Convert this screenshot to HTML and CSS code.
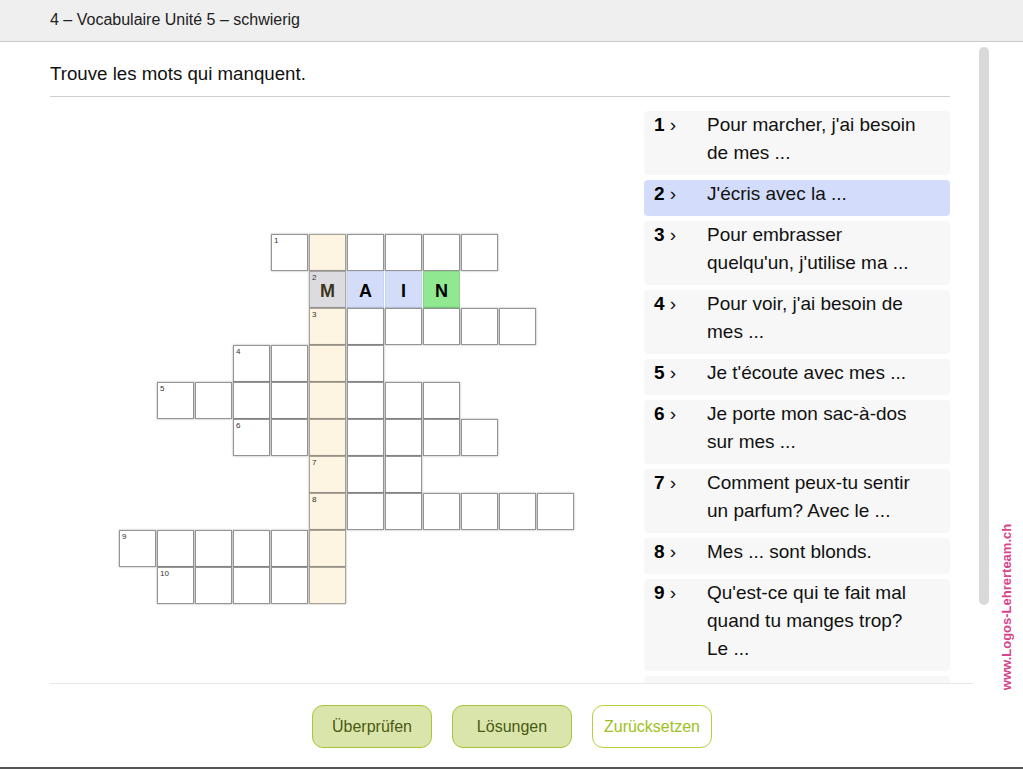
FILE: index.html
```html
<!DOCTYPE html>
<html lang="fr">
<head>
<meta charset="utf-8">
<title>Vocabulaire Unité 5</title>
<link rel="stylesheet" href="styles.css">
</head>
<body>
<div class="page">
  <header class="topbar">4 – Vocabulaire Unité 5 – schwierig</header>
  <main class="content">
    <div class="instr">Trouve les mots qui manquent.</div>
    <div class="work">
      <div class="grid-area">
        <div class="grid">
          <!-- row 1 -->
          <div class="cell" style="grid-area:1/5"><span class="n">1</span></div>
          <div class="cell v" style="grid-area:1/6"></div>
          <div class="cell" style="grid-area:1/7"></div>
          <div class="cell" style="grid-area:1/8"></div>
          <div class="cell" style="grid-area:1/9"></div>
          <div class="cell" style="grid-area:1/10"></div>
          <!-- row 2 -->
          <div class="cell cur" style="grid-area:2/6"><span class="n">2</span><b class="l m">M</b></div>
          <div class="cell sel" style="grid-area:2/7"><b class="l">A</b></div>
          <div class="cell sel" style="grid-area:2/8"><b class="l">I</b></div>
          <div class="cell ok" style="grid-area:2/9"><b class="l">N</b></div>
          <!-- row 3 -->
          <div class="cell v" style="grid-area:3/6"><span class="n">3</span></div>
          <div class="cell" style="grid-area:3/7"></div>
          <div class="cell" style="grid-area:3/8"></div>
          <div class="cell" style="grid-area:3/9"></div>
          <div class="cell" style="grid-area:3/10"></div>
          <div class="cell" style="grid-area:3/11"></div>
          <!-- row 4 -->
          <div class="cell" style="grid-area:4/4"><span class="n">4</span></div>
          <div class="cell" style="grid-area:4/5"></div>
          <div class="cell v" style="grid-area:4/6"></div>
          <div class="cell" style="grid-area:4/7"></div>
          <!-- row 5 -->
          <div class="cell" style="grid-area:5/2"><span class="n">5</span></div>
          <div class="cell" style="grid-area:5/3"></div>
          <div class="cell" style="grid-area:5/4"></div>
          <div class="cell" style="grid-area:5/5"></div>
          <div class="cell v" style="grid-area:5/6"></div>
          <div class="cell" style="grid-area:5/7"></div>
          <div class="cell" style="grid-area:5/8"></div>
          <div class="cell" style="grid-area:5/9"></div>
          <!-- row 6 -->
          <div class="cell" style="grid-area:6/4"><span class="n">6</span></div>
          <div class="cell" style="grid-area:6/5"></div>
          <div class="cell v" style="grid-area:6/6"></div>
          <div class="cell" style="grid-area:6/7"></div>
          <div class="cell" style="grid-area:6/8"></div>
          <div class="cell" style="grid-area:6/9"></div>
          <div class="cell" style="grid-area:6/10"></div>
          <!-- row 7 -->
          <div class="cell v" style="grid-area:7/6"><span class="n">7</span></div>
          <div class="cell" style="grid-area:7/7"></div>
          <div class="cell" style="grid-area:7/8"></div>
          <!-- row 8 -->
          <div class="cell v" style="grid-area:8/6"><span class="n">8</span></div>
          <div class="cell" style="grid-area:8/7"></div>
          <div class="cell" style="grid-area:8/8"></div>
          <div class="cell" style="grid-area:8/9"></div>
          <div class="cell" style="grid-area:8/10"></div>
          <div class="cell" style="grid-area:8/11"></div>
          <div class="cell" style="grid-area:8/12"></div>
          <!-- row 9 -->
          <div class="cell" style="grid-area:9/1"><span class="n">9</span></div>
          <div class="cell" style="grid-area:9/2"></div>
          <div class="cell" style="grid-area:9/3"></div>
          <div class="cell" style="grid-area:9/4"></div>
          <div class="cell" style="grid-area:9/5"></div>
          <div class="cell v" style="grid-area:9/6"></div>
          <!-- row 10 -->
          <div class="cell" style="grid-area:10/2"><span class="n">10</span></div>
          <div class="cell" style="grid-area:10/3"></div>
          <div class="cell" style="grid-area:10/4"></div>
          <div class="cell" style="grid-area:10/5"></div>
          <div class="cell v" style="grid-area:10/6"></div>
        </div>
      </div>
      <div class="clues">
        <div class="clue"><span class="num"><b>1</b> ›</span><span class="txt">Pour marcher, j'ai besoin de mes ...</span></div>
        <div class="clue active"><span class="num"><b>2</b> ›</span><span class="txt">J'écris avec la ...</span></div>
        <div class="clue"><span class="num"><b>3</b> ›</span><span class="txt">Pour embrasser quelqu'un, j'utilise ma ...</span></div>
        <div class="clue"><span class="num"><b>4</b> ›</span><span class="txt">Pour voir, j'ai besoin de mes ...</span></div>
        <div class="clue"><span class="num"><b>5</b> ›</span><span class="txt">Je t'écoute avec mes ...</span></div>
        <div class="clue"><span class="num"><b>6</b> ›</span><span class="txt">Je porte mon sac-à-dos sur mes ...</span></div>
        <div class="clue"><span class="num"><b>7</b> ›</span><span class="txt">Comment peux-tu sentir un parfum? Avec le ...</span></div>
        <div class="clue"><span class="num"><b>8</b> ›</span><span class="txt">Mes ... sont blonds.</span></div>
        <div class="clue"><span class="num"><b>9</b> ›</span><span class="txt">Qu'est-ce qui te fait mal quand tu manges trop? Le ...</span></div>
        <div class="clue clue-empty"></div>
      </div>
    </div>
    <div class="buttons">
      <button class="btn fill">Überprüfen</button>
      <button class="btn fill">Lösungen</button>
      <button class="btn outline">Zurücksetzen</button>
    </div>
  </main>
  <div class="scrollthumb"></div>
  <div class="brand">www.Logos-Lehrerteam.ch</div>
</div>
</body>
</html>
```

FILE: styles.css
```css
* { box-sizing: border-box; }
html, body { margin: 0; padding: 0; }
body {
  font-family: "Liberation Sans", Arial, Helvetica, sans-serif;
  color: #111;
  background: #fff;
}
.page {
  position: relative;
  width: 1023px;
  height: 769px;
  border-bottom: 2px solid #555;
  overflow: hidden;
}
.topbar {
  height: 42px;
  background: #efefef;
  border-bottom: 1px solid #c9c9c9;
  padding: 11px 0 0 50px;
  font-size: 16px;
  color: #222;
}
.content {
  margin-left: 50px;
  width: 923px;
}
.instr {
  width: 900px;
  height: 55px;
  padding-top: 21px;
  font-size: 18.7px;
  border-bottom: 1px solid #cfcfcf;
  color: #111;
}
.work {
  display: flex;
  height: 587px;
  border-bottom: 1px solid #e8e8e8;
}
.grid-area {
  width: 594px;
  padding: 137px 0 0 69px;
}
.grid {
  display: grid;
  grid-template-columns: repeat(12, 37px);
  grid-template-rows: repeat(10, 37px);
  column-gap: 1px;
}
.cell {
  position: relative;
  border: 1px solid #959595;
  background: #fff;
  box-shadow: 0 0 2px rgba(0,0,0,0.35);
  display: flex;
  align-items: center;
  justify-content: center;
}
.cell.v { background: #fdf4e2; border-color: #a8a398; }
.cell.cur { background: #dcdce0; border-color: #a8a8a8; }
.cell.sel { background: #d3ddfa; border-color: #c9d2ee; box-shadow: none; }
.cell.ok { background: #90e890; border-color: #86d886; box-shadow: none; }
.n {
  position: absolute;
  top: 1px;
  left: 2px;
  font-size: 8px;
  line-height: 9px;
  color: #333;
}
.l {
  font-size: 18px;
  font-weight: bold;
  color: #000;
  margin-top: 4px;
}
.l.m { color: #3d3420; }
.clues {
  width: 306px;
  padding-top: 14px;
  overflow: hidden;
  display: flex;
  flex-direction: column;
  gap: 5px;
}
.clue {
  display: flex;
  flex-shrink: 0;
  background: #f7f7f7;
  border-radius: 4px;
  padding: 0 10px 8px 10px;
  font-size: 19px;
  line-height: 28px;
  color: #111;
}
.clue-empty { height: 36px; }
.clue.active { background: #d3ddfb; }
.num {
  width: 53px;
  flex-shrink: 0;
  white-space: nowrap;
}
.num b { color: #000; }
.txt { width: 212px; }
.buttons {
  display: flex;
  justify-content: center;
  gap: 20px;
  padding: 21px 0 0 0;
  width: 924px;
}
.btn {
  width: 120px;
  height: 43px;
  border-radius: 11px;
  font-family: inherit;
  font-size: 16px;
  padding: 0;
  cursor: pointer;
}
.btn.fill {
  background: #d9e5aa;
  border: 1px solid #a9c53a;
  color: #4b5a12;
}
.btn.outline {
  background: #fff;
  border: 1px solid #b3d33c;
  color: #9ec122;
}
.scrollthumb {
  position: absolute;
  left: 979px;
  top: 47px;
  width: 10px;
  height: 558px;
  background: #d9d9d9;
  border-radius: 5px;
}
.brand {
  position: absolute;
  left: 1006px;
  top: 607px;
  transform: translate(-50%, -50%) rotate(-90deg);
  white-space: nowrap;
  font-size: 13px;
  font-weight: bold;
  color: #d9438a;
}
```
